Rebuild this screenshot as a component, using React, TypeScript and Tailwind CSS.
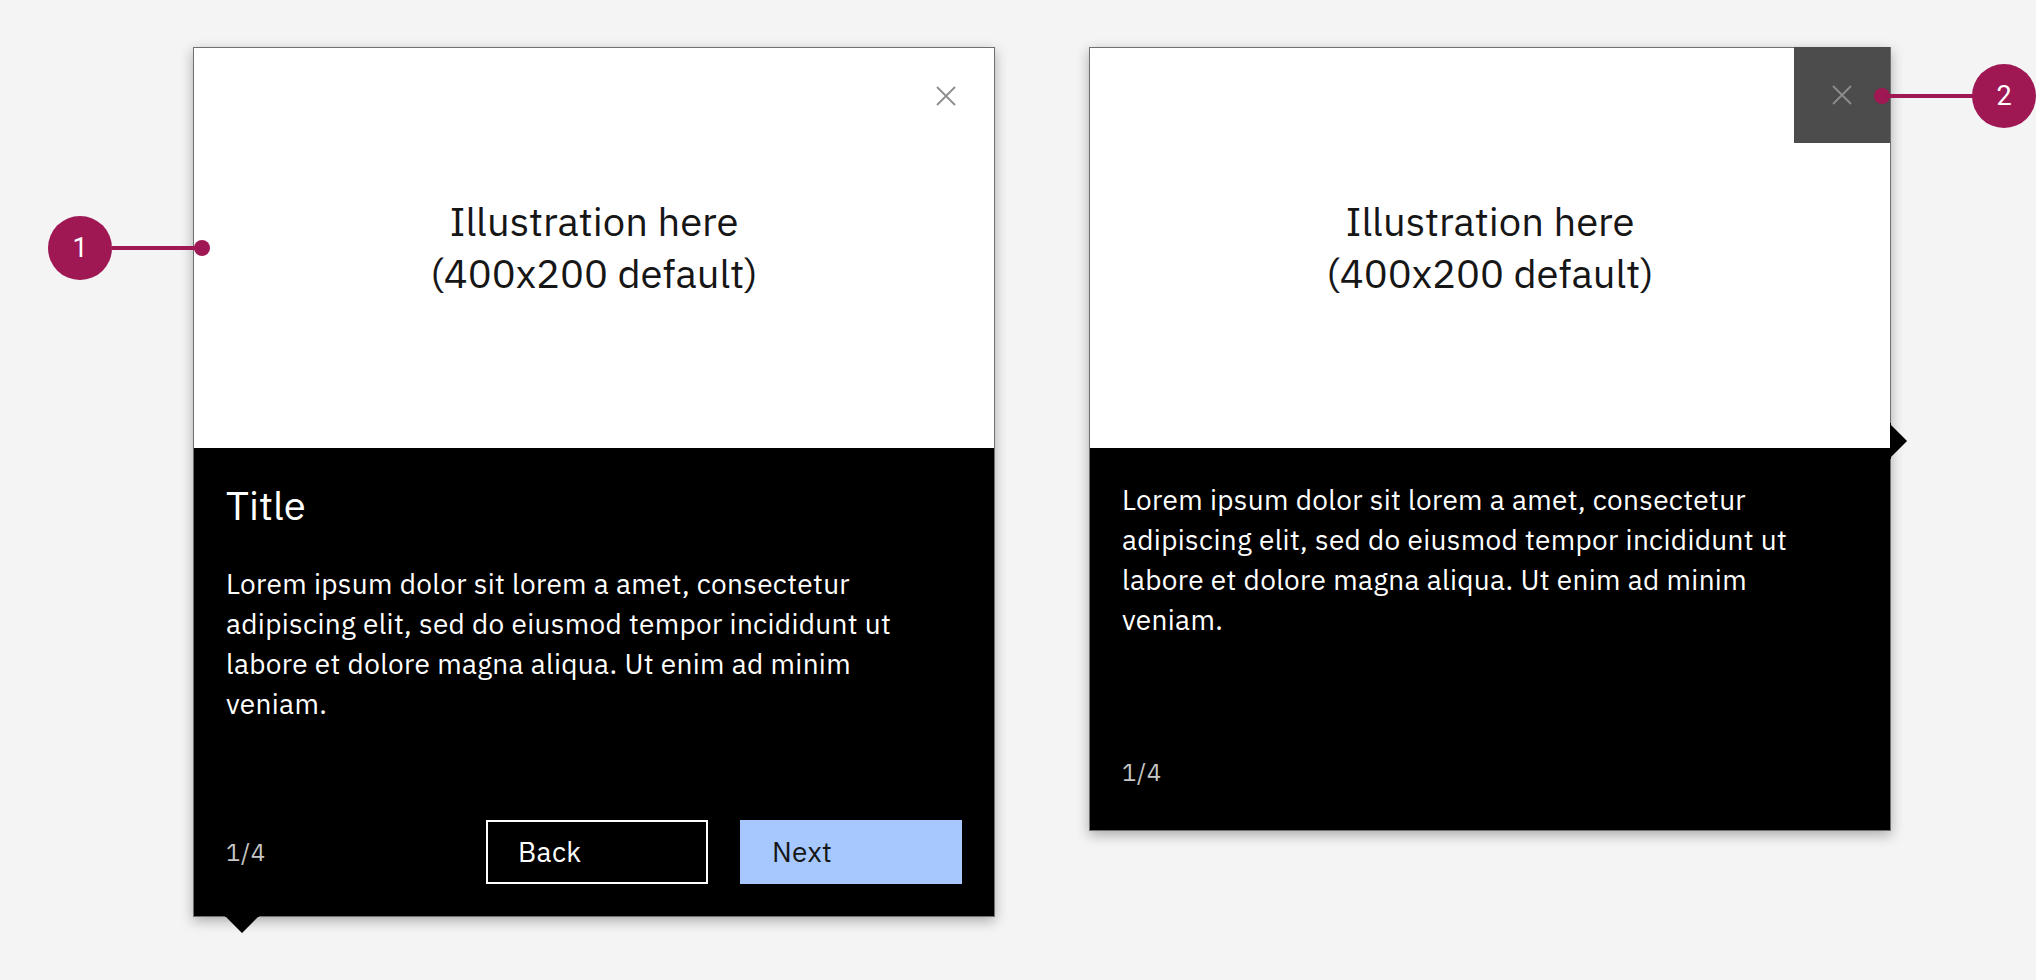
import React from "react";

const FONT = { fontFamily: '"IBM Plex Sans", Inter, "Liberation Sans", sans-serif' };

function CloseIcon({ color }: { color: string }) {
  return (
    <svg width="20" height="20" viewBox="0 0 20 20" fill="none">
      <path d="M1 1 L19 19 M19 1 L1 19" stroke={color} strokeWidth="1.8" />
    </svg>
  );
}

function Callout({ n, className }: { n: string; className: string }) {
  return (
    <div
      className={`absolute w-16 h-16 rounded-full bg-[#9f1853] text-white flex items-center justify-center text-[27px] ${className}`}
      style={{ fontFamily: 'Roboto, "Liberation Sans", sans-serif' }}
    >
      {n}
    </div>
  );
}

function Illustration() {
  return (
    <div className="h-[400px] bg-white flex items-center justify-center text-center text-[40px] leading-[52px] text-[#161616]">
      <div className="-mt-0.5">
        Illustration here
        <br />
        (400x200 default)
      </div>
    </div>
  );
}

function Body() {
  return (
    <p className="text-[28px] leading-[40px] tracking-[0.32px] text-white">
      Lorem ipsum dolor sit lorem a amet, consectetur
      <br />
      adipiscing elit, sed do eiusmod tempor incididunt ut
      <br />
      labore et dolore magna aliqua. Ut enim ad minim
      <br />
      veniam.
    </p>
  );
}

export default function App() {
  return (
    <div className="relative w-[2036px] h-[980px] bg-[#f4f4f4] overflow-hidden" style={FONT}>
      <div className="flex items-start gap-[94px] pl-[193px] pt-[47px]">
        {/* Card 1: with title and buttons */}
        <div className="relative w-[802px] border border-[#6f6f6f] bg-black shadow-[0_4px_12px_rgba(0,0,0,0.3)]">
          <div className="relative">
            <Illustration />
            <button className="absolute top-0 right-0 w-24 h-24 flex items-center justify-center">
              <CloseIcon color="#8d8d8d" />
            </button>
          </div>
          <div className="px-8 pt-[29px] pb-8">
            <h2 className="text-[40px] leading-[56px] text-white">Title</h2>
            <div className="mt-[31px]">
              <Body />
            </div>
            <div className="mt-24 flex items-center h-16">
              <span className="text-[24px] tracking-[0.64px] text-[#c6c6c6]">1/4</span>
              <div className="ml-auto flex gap-8">
                <button className="w-[222px] h-16 border-2 border-white text-white text-[28px] tracking-[0.32px] text-left pl-[30px]">
                  Back
                </button>
                <button className="w-[222px] h-16 bg-[#a6c8ff] text-[#161616] text-[28px] tracking-[0.32px] text-left pl-8">
                  Next
                </button>
              </div>
            </div>
          </div>
          {/* caret bottom */}
          <svg className="absolute left-[31px] -bottom-[18px]" width="34" height="18" viewBox="0 0 34 18">
            <polygon points="0,0 17,17 34,0" fill="#000" stroke="#6f6f6f" strokeWidth="1" />
            <rect x="0" y="-1" width="34" height="2" fill="#000" />
          </svg>
        </div>

        {/* Card 2: close button highlighted */}
        <div className="relative w-[802px] border border-[#6f6f6f] bg-black shadow-[0_4px_12px_rgba(0,0,0,0.3)]">
          <div className="relative">
            <Illustration />
            <button className="absolute -top-px right-0 w-24 h-24 bg-[#4c4c4c] flex items-center justify-center">
              <CloseIcon color="#8d8d8d" />
            </button>
          </div>
          <div className="px-8 pt-8 pb-[26px]">
            <Body />
            <div className="mt-[100px] flex items-center h-16">
              <span className="text-[24px] tracking-[0.64px] text-[#c6c6c6]">1/4</span>
            </div>
          </div>
          {/* caret right */}
          <svg className="absolute -right-[18px] top-[375px]" width="18" height="36" viewBox="0 0 18 36">
            <polygon points="0,1 17,18 0,35" fill="#000" stroke="#6f6f6f" strokeWidth="1" />
            <rect x="-1" y="0" width="2" height="36" fill="#000" />
          </svg>
        </div>
      </div>

      {/* callout 1 */}
      <Callout n="1" className="left-[48px] top-[216px]" />
      <div className="absolute left-[112px] top-[246px] w-[88px] h-1 bg-[#9f1853]" />
      <div className="absolute left-[194px] top-[240px] w-4 h-4 rounded-full bg-[#9f1853]" />

      {/* callout 2 */}
      <Callout n="2" className="left-[1972px] top-[64px]" />
      <div className="absolute left-[1882px] top-[94px] w-[92px] h-1 bg-[#9f1853]" />
      <div className="absolute left-[1874px] top-[88px] w-4 h-4 rounded-full bg-[#9f1853]" />
    </div>
  );
}
